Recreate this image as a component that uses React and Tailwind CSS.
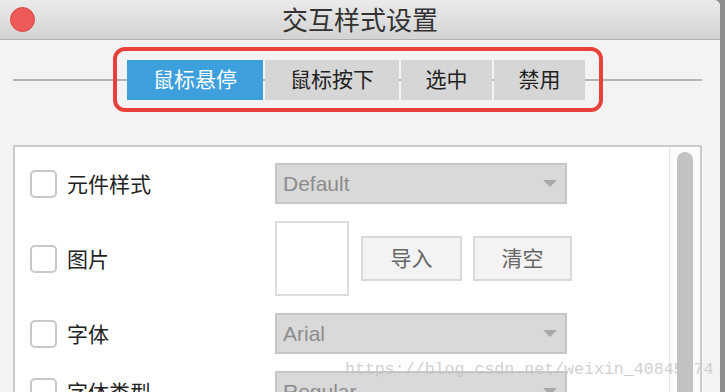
import React from "react";

const font = "font-['Liberation_Sans','Noto_Sans_CJK_SC',sans-serif]";

const tabs = [
  { label: "鼠标悬停", w: "w-[136px]", active: true },
  { label: "鼠标按下", w: "w-[134px]" },
  { label: "选中", w: "w-[91px]" },
  { label: "禁用", w: "w-[91px]" },
];

const Checkbox = () => (
  <div className="w-[27px] h-[28px] shrink-0 rounded-[5px] border-2 border-[#c8c8c8] bg-white" />
);

const Select = ({ value }) => (
  <div className="w-[292px] h-[41px] flex items-center justify-between pl-[6px] pr-[8px] bg-[#d9d9d9] border-2 border-[#c6c6c6]">
    <span className="text-[21px] text-[#8c8c8c]">{value}</span>
    <svg width="14" height="7" viewBox="0 0 14 7">
      <path d="M0 0 L14 0 L7 7 Z" fill="#a9a9a9" />
    </svg>
  </div>
);

const Row = ({ label, children }) => (
  <div className="flex items-center">
    <div className="w-[245px] flex items-center gap-[10px]">
      <Checkbox />
      <span className="text-[21px] text-[#222] pt-[3px]">{label}</span>
    </div>
    {children}
  </div>
);

const Button = ({ children, w }) => (
  <button className={`${w} h-[45px] flex items-center justify-center bg-[#f3f3f3] border-2 border-[#d9d9d9] text-[21px] text-[#666]`}>
    {children}
  </button>
);

export default function App() {
  return (
    <div className={`w-[725px] h-[392px] overflow-hidden flex bg-[#8d8d8d] ${font}`}>
      <div className="relative w-[720px] h-full flex flex-col bg-[#f3f3f3] rounded-tr-[6px] overflow-hidden">
        {/* title bar */}
        <div className="h-[40px] shrink-0 flex items-center px-[10px] border-b border-[#adadad] bg-gradient-to-b from-[#ebebeb] to-[#d3d3d3]">
          <div className="w-[25px] h-[25px] rounded-full bg-[#ee5a57] border border-[#d94744]" />
          <div className="flex-1 text-center text-[26px] text-[#333] leading-none pt-[2px]">交互样式设置</div>
          <div className="w-[25px]" />
        </div>

        {/* tab group on rule */}
        <div className="grid items-center pt-[7px] pl-[13px] pr-[18px]">
          <div className="[grid-area:1/1] h-[2px] bg-[#b4b4b4]" />
          <div className="[grid-area:1/1] justify-self-start ml-[100px] w-[490px] h-[65px] rounded-[12px] border-[4px] border-[#e8403a] flex items-center pl-[10px] gap-[2px]">
            {tabs.map((t) => (
              <div
                key={t.label}
                className={`${t.w} h-[40px] flex items-center justify-center text-[21px] ${
                  t.active ? "bg-[#3d9fdc] text-white" : "bg-[#d6d6d6] text-[#222]"
                }`}
              >
                {t.label}
              </div>
            ))}
          </div>
        </div>

        {/* panel */}
        <div className="mt-[33px] ml-[13px] w-[689px] flex-1 flex bg-white border-2 border-b-0 border-[#cbcbcb]">
          <div className="flex-1 flex flex-col gap-[17px] pt-[16px] pl-[15px]">
            <Row label="元件样式">
              <Select value="Default" />
            </Row>
            <Row label="图片">
              <div className="w-[74px] h-[75px] bg-white border-2 border-[#dedede]" />
              <div className="ml-[12px] flex gap-[11px]">
                <Button w="w-[101px]">导入</Button>
                <Button w="w-[99px]">清空</Button>
              </div>
            </Row>
            <Row label="字体">
              <Select value="Arial" />
            </Row>
            <Row label="字体类型">
              <Select value="Regular" />
            </Row>
          </div>
          <div className="w-[31px] shrink-0 border-l border-[#e6e6e6] bg-[#fbfbfb] pt-[5px] flex justify-center">
            <div className="w-[16px] h-[400px] rounded-full bg-[#c2c2c2]" />
          </div>
        </div>

        {/* watermark */}
        <div className="absolute left-[345px] top-[362px] font-['Liberation_Mono',monospace] text-[16.6px] leading-none text-[#c4c4c4]/80 whitespace-nowrap">
          https://blog.csdn.net/weixin_40845074
        </div>
      </div>
    </div>
  );
}
